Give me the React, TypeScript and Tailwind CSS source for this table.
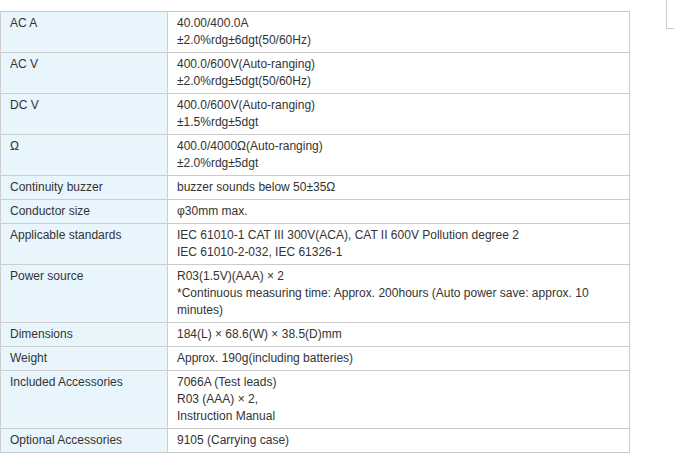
import React from "react";

const rows: [string, string[]][] = [
  ["AC A", ["40.00/400.0A", "±2.0%rdg±6dgt(50/60Hz)"]],
  ["AC V", ["400.0/600V(Auto-ranging)", "±2.0%rdg±5dgt(50/60Hz)"]],
  ["DC V", ["400.0/600V(Auto-ranging)", "±1.5%rdg±5dgt"]],
  ["Ω", ["400.0/4000Ω(Auto-ranging)", "±2.0%rdg±5dgt"]],
  ["Continuity buzzer", ["buzzer sounds below 50±35Ω"]],
  ["Conductor size", ["φ30mm max."]],
  ["Applicable standards", ["IEC 61010-1 CAT III 300V(ACA), CAT II 600V Pollution degree 2", "IEC 61010-2-032, IEC 61326-1"]],
  ["Power source", ["R03(1.5V)(AAA) × 2", "*Continuous measuring time: Approx. 200hours (Auto power save: approx. 10 minutes)"]],
  ["Dimensions", ["184(L) × 68.6(W) × 38.5(D)mm"]],
  ["Weight", ["Approx. 190g(including batteries)"]],
  ["Included Accessories", ["7066A (Test leads)", "R03 (AAA) × 2,", "Instruction Manual"]],
  ["Optional Accessories", ["9105 (Carrying case)"]],
];

export default function App() {
  return (
    <div className="flex w-[674px] h-[462px] bg-white overflow-hidden" style={{ fontFamily: '"Liberation Sans", Arial, sans-serif' }}>
      <div className="mt-[11px] w-[630px] shrink-0 self-start border border-[#cccccc] text-[12px] leading-[17px] text-[#333333]">
        {rows.map(([k, v], i) => (
          <div key={i} className={`flex ${i > 0 ? "border-t border-[#cccccc]" : ""}`}>
            <div className="w-[167px] shrink-0 bg-[#e8f5fd] border-r border-[#cccccc] px-[9px] py-[3px]">{k}</div>
            <div className="flex-1 px-[9px] py-[3px]">
              {v.map((line, j) => (
                <div key={j}>{line}</div>
              ))}
            </div>
          </div>
        ))}
      </div>
      <div className="ml-[36px] w-[8px] shrink-0 h-[29px] border-l border-b border-[#cccccc]" />
    </div>
  );
}
